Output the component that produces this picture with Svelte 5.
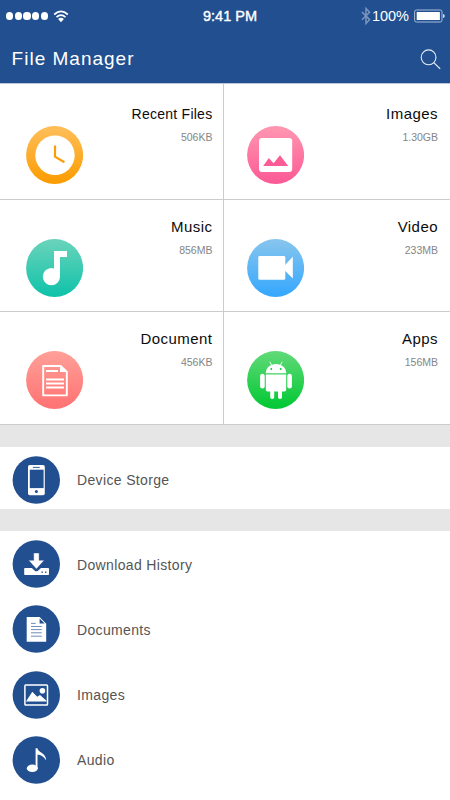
<script lang="ts">
  type Icon =
    | 'clock' | 'picture' | 'music' | 'video' | 'document' | 'android'
    | 'phone' | 'download' | 'page' | 'photo' | 'note';

  interface Category {
    label: string;
    size: string;
    icon: Icon;
    from: string;
    to: string;
  }

  interface Entry {
    label: string;
    icon: Icon;
  }

  const categories: Category[] = [
    { label: 'Recent Files', size: '506KB', icon: 'clock', from: '#ffbd56', to: '#fb9d04' },
    { label: 'Images', size: '1.30GB', icon: 'picture', from: '#ff94b0', to: '#fc5c95' },
    { label: 'Music', size: '856MB', icon: 'music', from: '#66d3ba', to: '#12c3aa' },
    { label: 'Video', size: '233MB', icon: 'video', from: '#84c4ee', to: '#38a8fd' },
    { label: 'Document', size: '456KB', icon: 'document', from: '#ff9e96', to: '#ff7474' },
    { label: 'Apps', size: '156MB', icon: 'android', from: '#5dd975', to: '#04c936' },
  ];

  const storage: Entry[] = [{ label: 'Device Storge', icon: 'phone' }];

  const places: Entry[] = [
    { label: 'Download History', icon: 'download' },
    { label: 'Documents', icon: 'page' },
    { label: 'Images', icon: 'photo' },
    { label: 'Audio', icon: 'note' },
  ];

  const signal = [0, 1, 2, 3, 4];
</script>

<!-- White glyphs for the category discs, drawn in a 57x58 box -->
{#snippet categoryGlyph(icon: Icon, tint: string)}
  {#if icon === 'clock'}
    <circle cx="29" cy="29.2" r="19.7" fill="#fff" />
    <path d="M29 19.5V30.6L38.4 36.2" fill="none" stroke={tint} stroke-width="2.2" />
  {:else if icon === 'picture'}
    <rect x="12" y="12" width="33.2" height="34" rx="3" fill="#fff" />
    <path d="M16.2 40L21.8 32L26.6 37.2L33 29.3L41.2 40Z" fill={tint} />
  {:else if icon === 'music'}
    <path d="M28 12H41V18H34V37.7H28Z" fill="#fff" />
    <circle cx="25.4" cy="37.7" r="8.6" fill="#fff" />
  {:else if icon === 'video'}
    <rect x="11.3" y="17" width="27" height="23.8" rx="1.4" fill="#fff" />
    <path d="M37.5 26.5L45.8 17.8V39.6L37.5 31.3Z" fill="#fff" />
  {:else if icon === 'document'}
    <path d="M17.2 15H34.6L40.8 20.8V44.4H17.2Z" fill="none" stroke="#fff" stroke-width="1.9" stroke-linejoin="round" />
    <path d="M34 14.6V21H41Z" fill="#fff" />
    <path d="M20 20H32M20 28.4H38M20 32.4H38M20 36.4H38" stroke="#fff" stroke-width="2" />
  {:else}
    <path d="M18.8 22.2C19 16.5 23.2 13 29 13S39 16.5 39.2 22.2Z" fill="#fff" />
    <path d="M22.8 10.8L25 14.8M35.2 10.8L33 14.8" stroke="#fff" stroke-width="0.9" />
    <circle cx="24.3" cy="18" r="0.9" fill={tint} />
    <circle cx="33.7" cy="18" r="0.9" fill={tint} />
    <path d="M18.8 23.4H39.2V38.7Q39.2 40.4 37.5 40.4H20.5Q18.8 40.4 18.8 38.7Z" fill="#fff" />
    <rect x="13.1" y="22.8" width="4.6" height="14.6" rx="2.2" fill="#fff" />
    <rect x="40.3" y="22.8" width="4.6" height="14.6" rx="2.2" fill="#fff" />
    <path d="M23.2 39H27.2V46.2Q27.2 48 25.2 48T23.2 46.2ZM31 39H35V46.2Q35 48 33 48T31 46.2Z" fill="#fff" />
  {/if}
{/snippet}

<!-- Glyphs for the blue list discs, drawn in a 48x48 box -->
{#snippet listGlyph(icon: Icon)}
  {#if icon === 'phone'}
    <rect x="16" y="9" width="16.8" height="30.2" rx="1.8" fill="#fff" />
    <rect x="17.8" y="13.7" width="13.8" height="18.4" fill="#214f8f" />
    <path d="M20.8 11.4H27.8" stroke="#214f8f" stroke-width="0.9" />
    <circle cx="24.4" cy="35.6" r="1.5" fill="#214f8f" />
  {:else if icon === 'download'}
    <path d="M13 28H19.8L22.8 30.7Q24.4 31.8 26 30.7L29 28H36.2Q37 28 37 28.8V34.2Q37 35 36.2 35H13Q12.2 35 12.2 34.2V28.8Q12.2 28 13 28Z" fill="#fff" />
    <path d="M21.7 13H27.1V20.3H32.2L24.4 29L16.6 20.3H21.7Z" fill="#fff" stroke="#214f8f" stroke-width="0.4" />
    <rect x="29.5" y="31.5" width="1.4" height="1.4" fill="#214f8f" />
    <rect x="33" y="31.5" width="1.4" height="1.4" fill="#214f8f" />
  {:else if icon === 'page'}
    <path d="M14.7 12H27.6L34.2 18.8V36.7H14.7Z" fill="#fff" />
    <path d="M27.6 13.6V18.6H32.6Z" fill="#214f8f" />
    <path d="M19 18.4H23.7M19 21.5H29.8M19 24.6H29.8M19 27.8H29.8M19 31.2H29.8" stroke="#6080af" stroke-width="0.9" />
  {:else if icon === 'photo'}
    <rect x="12.9" y="14.1" width="22.6" height="20" rx="0.8" fill="none" stroke="#fff" stroke-width="1.5" />
    <path d="M14 30.4L20.3 20.8L25.2 25.8L28 24L34.5 29.8V30.6H14Z" fill="#fff" />
    <circle cx="30.4" cy="19.8" r="2.8" fill="#fff" />
  {:else}
    <ellipse cx="20.3" cy="32.3" rx="5.5" ry="3.7" fill="#fff" />
    <path d="M23.6 12.3H25.4C26.2 17 33.8 16.4 34.2 24.6C31.6 20.4 28.6 19 25.5 18.6V32.4H23.6Z" fill="#fff" />
  {/if}
{/snippet}

{#snippet row(entry: Entry)}
  <li class="row">
    <svg class="row-icon" viewBox="0 0 48 48" aria-hidden="true">
      <circle cx="24.3" cy="24" r="23.7" fill="#214f8f" />
      {@render listGlyph(entry.icon)}
    </svg>
    <span class="row-label">{entry.label}</span>
  </li>
{/snippet}

<div class="screen">
  <header>
    <div class="status">
      <div class="status-left">
        <div class="signal">
          {#each signal as dot (dot)}
            <i></i>
          {/each}
        </div>
        <svg width="16" height="13" viewBox="0 0 16 13" aria-hidden="true">
          <path d="M1.2 4.5Q8 -1.6 14.8 4.5M3.5 7.2Q8 3.2 12.5 7.2" fill="none" stroke="#fff" stroke-width="1.7" />
          <path d="M5.1 9.1Q8 6.6 10.9 9.1L8 12.2Z" fill="#fff" />
        </svg>
      </div>
      <span class="time">9:41 PM</span>
      <div class="status-right">
        <svg width="10" height="18" viewBox="0 0 10 18" aria-hidden="true">
          <path d="M1 5L8.6 12.6L5 16.5V1.5L8.6 5.2L1 12.8" fill="none" stroke="#7996bf" stroke-width="1.5" />
        </svg>
        <span class="percent">100%</span>
        <svg class="battery" width="31" height="14" viewBox="0 0 31 14" aria-hidden="true">
          <rect x="0.6" y="1" width="27.4" height="12" rx="1.8" fill="none" stroke="#a9bdd9" stroke-width="1" />
          <rect x="2.7" y="3" width="23.2" height="8" rx="0.5" fill="#fff" />
          <path d="M29 5Q30.8 5.6 30.8 7T29 9Z" fill="#d5dfec" />
        </svg>
      </div>
    </div>
    <div class="titlebar">
      <h1>File Manager</h1>
      <svg width="21" height="21" viewBox="0 0 21 21" aria-label="Search">
        <circle cx="8.6" cy="8.3" r="7.4" fill="none" stroke="#e6edf6" stroke-width="1.1" />
        <path d="M13.8 13.6L20.2 19.9" stroke="#e6edf6" stroke-width="1.3" />
      </svg>
    </div>
  </header>

  <main>
    <section class="grid">
      {#each categories as c (c.label)}
        <div class="cell">
          <svg class="disc" viewBox="0 0 57 58" aria-hidden="true">
            <defs>
              <linearGradient id="fill-{c.icon}" x1="0" y1="0" x2="0" y2="1">
                <stop offset="0.05" stop-color={c.from} />
                <stop offset="0.95" stop-color={c.to} />
              </linearGradient>
            </defs>
            <ellipse cx="28.6" cy="29" rx="28.5" ry="29" fill="url(#fill-{c.icon})" />
            {@render categoryGlyph(c.icon, c.to)}
          </svg>
          <div class="info">
            <span class="name" class:compact={c.icon === 'clock'}>{c.label}</span>
            <span class="size">{c.size}</span>
          </div>
        </div>
      {/each}
    </section>

    <ul class="list storage">
      {#each storage as entry (entry.label)}
        {@render row(entry)}
      {/each}
    </ul>

    <ul class="list places">
      {#each places as entry (entry.label)}
        {@render row(entry)}
      {/each}
    </ul>
  </main>
</div>

<style>
  :global(body) {
    background: #fff;
  }

  .screen {
    display: flex;
    flex-direction: column;
    width: 450px;
    height: 800px;
    overflow: hidden;
    background: #e6e6e6;
    font-family: 'Liberation Sans', Arial, sans-serif;
  }

  header {
    box-sizing: border-box;
    flex: none;
    height: 84px;
    background: #214f8f;
    color: #fff;
    border-bottom: 1px solid #b9c6da;
  }

  .status {
    display: grid;
    grid-template-columns: 1fr auto 1fr;
    align-items: center;
    height: 32px;
    padding: 0 5px 0 6px;
    font-size: 14.5px;
    line-height: 18px;
  }

  .status-left,
  .status-right,
  .signal {
    display: flex;
    align-items: center;
  }

  .status-left {
    gap: 5px;
  }

  .status-right {
    justify-content: flex-end;
  }

  .signal {
    gap: 1.5px;
  }

  .signal i {
    width: 7.2px;
    height: 7.2px;
    border-radius: 50%;
    background: #fff;
  }

  .time {
    padding-left: 9px;
    -webkit-text-stroke: 0.4px #fff;
  }

  .percent {
    margin-left: 1px;
  }

  .battery {
    margin-left: 5px;
  }

  .titlebar {
    display: flex;
    align-items: center;
    justify-content: space-between;
    height: 51px;
    padding: 3px 9px 0 11.6px;
    box-sizing: border-box;
  }

  h1 {
    margin: 0;
    font-size: 19px;
    font-weight: 400;
    line-height: 22px;
    letter-spacing: 1px;
  }

  .grid {
    display: grid;
    grid-template-columns: 224px 226px;
    grid-template-rows: 116px 112px 113px;
    background: #fff;
  }

  .cell {
    display: flex;
    align-items: flex-end;
    justify-content: space-between;
    box-sizing: border-box;
    padding: 0 12px 15px 26px;
    border-bottom: 1px solid #cbcccc;
  }

  .cell:nth-child(odd) {
    border-right: 1px solid #cbcccc;
    padding-right: 10.6px;
  }

  .cell:nth-child(even) {
    padding-left: 23px;
  }

  .cell:nth-child(n + 3) {
    padding-bottom: 14px;
  }

  .cell:nth-child(n + 5) {
    padding-bottom: 14.6px;
  }

  .disc {
    flex: none;
    width: 57px;
    height: 58px;
  }

  .info {
    display: flex;
    flex-direction: column;
    align-items: flex-end;
    gap: 7.5px;
    height: 79px;
  }

  .name {
    color: #0c0c0c;
    font-size: 15px;
    line-height: 18px;
    letter-spacing: 0.45px;
  }

  .compact {
    font-size: 14px;
    letter-spacing: 0.25px;
  }

  .size {
    color: #858585;
    font-size: 10.5px;
    line-height: 12px;
    letter-spacing: 0;
  }

  .list {
    box-sizing: border-box;
    margin: 22px 0 0;
    padding: 0 12px;
    list-style: none;
    background: #fff;
  }

  .storage {
    height: 62px;
  }

  .places {
    height: 269px;
    padding-top: 0.6px;
  }

  .row {
    display: flex;
    align-items: center;
    gap: 17px;
    height: 65.2px;
  }

  .row-icon {
    flex: none;
    width: 48px;
    height: 48px;
  }

  .row-label {
    padding-top: 1px;
    color: #555;
    font-size: 14px;
    line-height: 16px;
    letter-spacing: 0.35px;
  }
</style>
